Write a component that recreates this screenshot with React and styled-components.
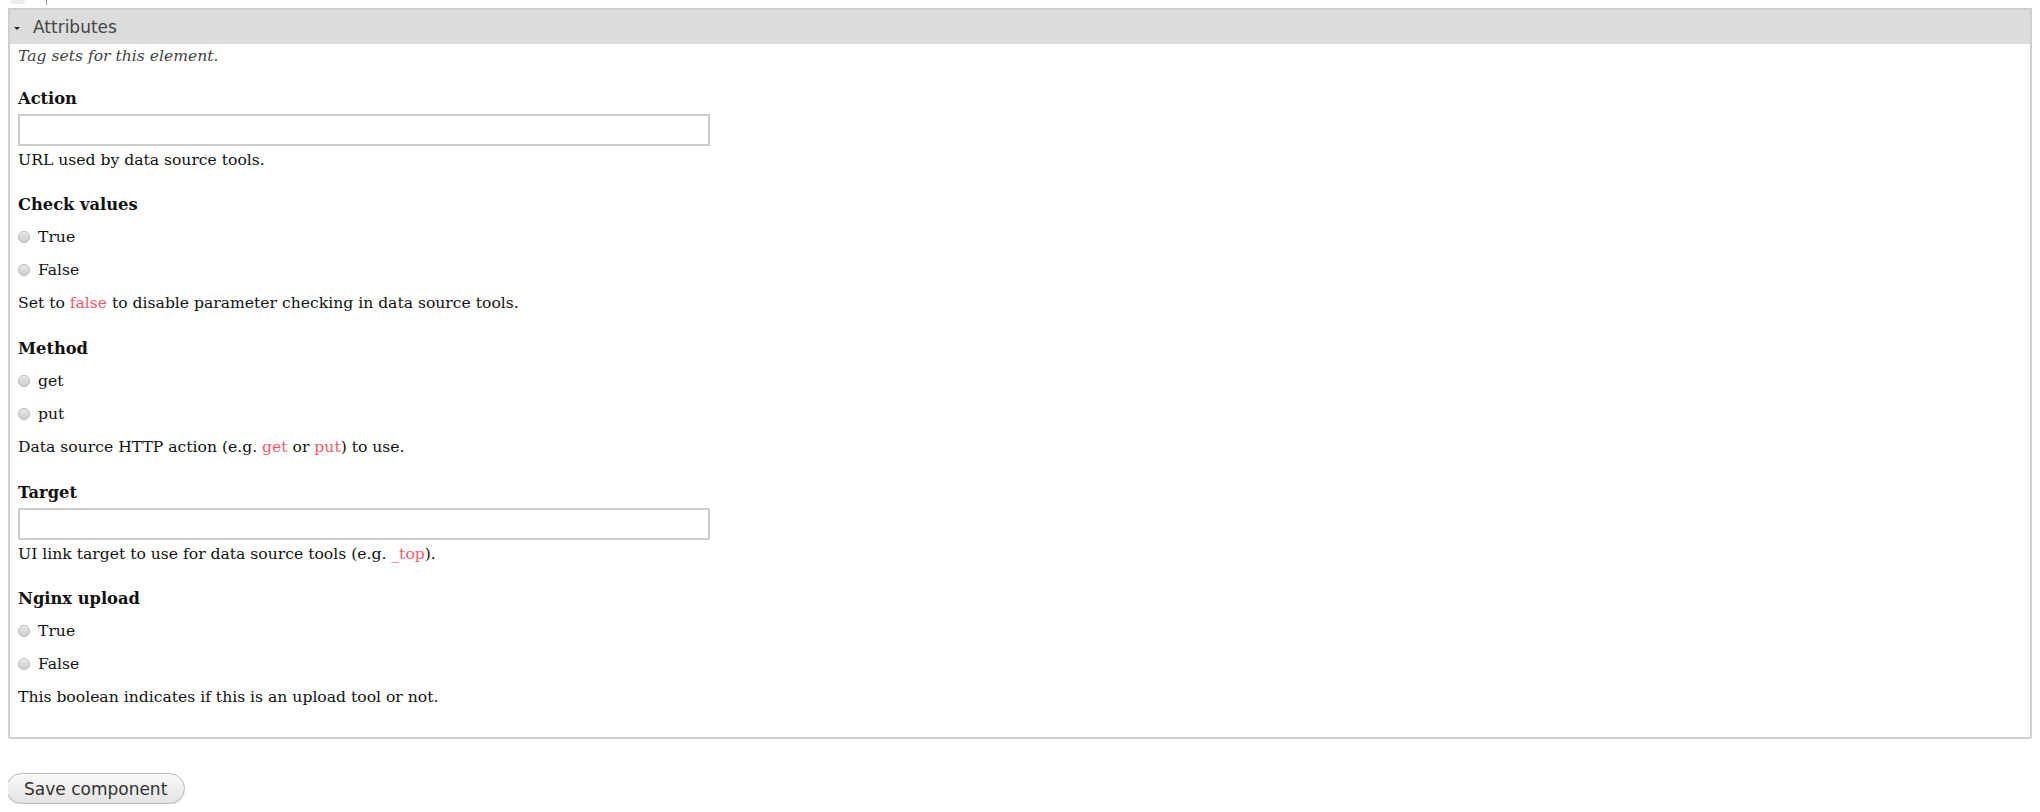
import React from "react";
import styled, { createGlobalStyle } from "styled-components";

const Global = createGlobalStyle`
  html, body { background: #fff; }
  body {
    margin: 0 8px 8px 8px;
    font-family: "DejaVu Serif", "Liberation Serif", serif;
    color: #111;
  }
`;

const PrevStrip = styled.div`
  height: 8px;
  overflow: hidden;
  position: relative;
`;

const PrevKnob = styled.div`
  position: absolute;
  left: 2px;
  top: -10px;
  width: 15px;
  height: 14px;
  border-radius: 4px;
  background: #ececec;
`;

const PrevLine = styled.div`
  position: absolute;
  left: 38px;
  top: 0;
  width: 1px;
  height: 5px;
  background: #999;
`;

const Fieldset = styled.section`
  border: 2px solid #cfcfcf;
  border-radius: 0 0 3px 3px;
  padding: 0 0 27px 0;
`;

const Legend = styled.div`
  display: flex;
  align-items: center;
  height: 34px;
  background: #dcdcdc;
  padding-left: 4px;
  font-family: "DejaVu Sans", "Open Sans", sans-serif;
  font-size: 17px;
  color: #444;
`;

const Caret = styled.span`
  display: inline-block;
  width: 0;
  height: 0;
  border-left: 3px solid transparent;
  border-right: 3px solid transparent;
  border-top: 3px solid #222;
  margin: 2px 13px 0 0;
`;

const Body = styled.div`
  padding: 0 8px;
  font-size: 15.6px;
`;

const Intro = styled.div`
  font-style: italic;
  color: #444;
  height: 24px;
  line-height: 24px;
`;

const Group = styled.div`
  padding-top: ${(p) => p.$top}px;
`;

const Label = styled.div`
  font-weight: bold;
  font-size: 16.3px;
  box-sizing: border-box;
  height: 26px;
  padding-top: 3px;
  line-height: 23px;
  color: #111;
`;

const TextInput = styled.input`
  display: block;
  box-sizing: border-box;
  width: 692px;
  height: 32px;
  border: 2px solid #cccccc;
  margin: 4px 0 1px;
  padding: 0 6px;
  font: inherit;
  outline: none;
`;

const Radios = styled.div`
  margin: 4px 0 4px;
`;

const RadioRow = styled.label`
  display: flex;
  align-items: center;
  height: 33px;
  gap: 8px;
  color: #111;
`;

const Radio = styled.span`
  box-sizing: border-box;
  width: 12px;
  height: 12px;
  border-radius: 50%;
  border: 1px solid #b4b4b4;
  background: linear-gradient(#e6e6e6, #cfcfcf);
  box-shadow: inset 0 1px 1px rgba(255, 255, 255, 0.6);
  flex: none;
  margin-top: 1px;
`;

const Desc = styled.div`
  height: 26px;
  line-height: 26px;
  color: #111;
`;

const Code = styled.span`
  color: #f35b6c;
`;

const ButtonRow = styled.div`
  padding-top: 34px;
`;

const SaveButton = styled.button`
  margin-left: -2px;
  height: 31px;
  padding: 0 17px;
  border: 1px solid #b9b9b9;
  border-radius: 16px;
  background: linear-gradient(#fafafa, #e3e3e3);
  box-shadow: 0 1px 1px rgba(0, 0, 0, 0.12);
  font-family: "DejaVu Sans", "Open Sans", sans-serif;
  font-size: 17px;
  color: #333;
  cursor: pointer;
`;

const RadioGroup = ({ options }) => (
  <Radios>
    {options.map((o) => (
      <RadioRow key={o}>
        <Radio />
        {o}
      </RadioRow>
    ))}
  </Radios>
);

export default function App() {
  return (
    <>
      <Global />
      <PrevStrip>
        <PrevKnob />
        <PrevLine />
      </PrevStrip>
      <Fieldset>
        <Legend>
          <Caret />
          Attributes
        </Legend>
        <Body>
          <Intro>Tag sets for this element.</Intro>

          <Group $top={16}>
            <Label>Action</Label>
            <TextInput type="text" />
            <Desc>URL used by data source tools.</Desc>
          </Group>

          <Group $top={17}>
            <Label>Check values</Label>
            <RadioGroup options={["True", "False"]} />
            <Desc>
              Set to <Code>false</Code> to disable parameter checking in data source tools.
            </Desc>
          </Group>

          <Group $top={18}>
            <Label>Method</Label>
            <RadioGroup options={["get", "put"]} />
            <Desc>
              Data source HTTP action (e.g. <Code>get</Code> or <Code>put</Code>) to use.
            </Desc>
          </Group>

          <Group $top={18}>
            <Label>Target</Label>
            <TextInput type="text" />
            <Desc>
              UI link target to use for data source tools (e.g. <Code>_top</Code>).
            </Desc>
          </Group>

          <Group $top={17}>
            <Label>Nginx upload</Label>
            <RadioGroup options={["True", "False"]} />
            <Desc>This boolean indicates if this is an upload tool or not.</Desc>
          </Group>
        </Body>
      </Fieldset>
      <ButtonRow>
        <SaveButton type="button">Save component</SaveButton>
      </ButtonRow>
    </>
  );
}
